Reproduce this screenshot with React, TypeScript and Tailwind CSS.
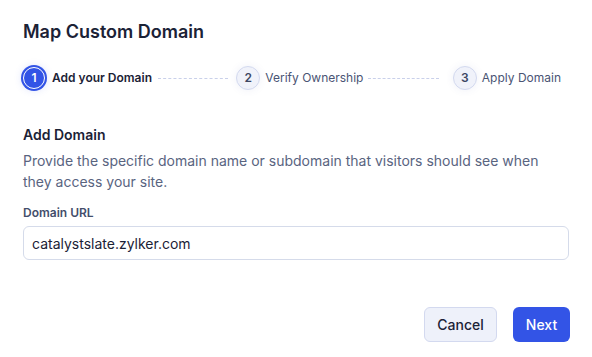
import React from "react";

function StepCircle({ n, active }: { n: number; active?: boolean }) {
  if (active) {
    return (
      <div className="flex h-[22px] w-[22px] items-center justify-center rounded-full bg-[#3354e6] border-[1.5px] border-white ring-2 ring-[#3354e6] text-[12px] font-semibold text-white shadow-[0_0_8px_rgba(51,84,230,0.25)]">
        {n}
      </div>
    );
  }
  return (
    <div className="flex h-[24px] w-[24px] items-center justify-center rounded-full border border-[#d3d9ef] bg-[#f0f2fa] text-[12px] font-semibold text-[#3d4763] shadow-[0_0_8px_rgba(60,80,160,0.08)]">
      {n}
    </div>
  );
}

export default function App() {
  return (
    <div
      className="w-[592px] h-[357px] bg-white px-[23px] pt-[19px]"
      style={{ fontFamily: "Inter, 'Noto Sans', sans-serif" }}
    >
      <h1 className="text-[18px] leading-[26px] font-semibold text-[#1b2236]">
        Map Custom Domain
      </h1>

      <div className="mt-[21px] flex h-[24px] items-center">
        <div className="flex items-center gap-[7px]">
          <StepCircle n={1} active />
          <span className="text-[12px] font-semibold text-[#1b2236]">Add your Domain</span>
        </div>
        <div className="ml-[6px] mr-[8px] flex-1 border-t border-dashed border-[#c9d0ea]" />
        <div className="flex items-center gap-[5px]">
          <StepCircle n={2} />
          <span className="text-[12px] text-[#4a5474]">Verify Ownership</span>
        </div>
        <div className="ml-[5px] mr-[14px] flex-1 border-t border-dashed border-[#c9d0ea]" />
        <div className="flex items-center gap-[5px] pr-[8px]">
          <StepCircle n={3} />
          <span className="text-[12px] text-[#4a5474]">Apply Domain</span>
        </div>
      </div>

      <h2 className="mt-[35px] text-[14px] leading-[20px] font-semibold text-[#1b2236]">
        Add Domain
      </h2>
      <p className="mt-[5px] text-[14px] leading-[21px] text-[#59647f]">
        Provide the specific domain name or subdomain that visitors should see when they access your site.
      </p>

      <label className="mt-[13px] block text-[12px] leading-[16px] font-semibold text-[#434e6b]">
        Domain URL
      </label>
      <div className="mt-[5px] flex h-[34px] items-center rounded-[6px] border border-[#d5dbea] bg-white px-[8px] text-[14px] text-[#1b2236]">
        catalystslate.zylker.com
      </div>

      <div className="mt-[47px] flex justify-end gap-[16px] -mr-px">
        <button className="h-[35px] w-[73px] rounded-[6px] border border-[#d3d9ef] bg-[#eef1fa] text-[14px] font-medium text-[#1b2236]">
          Cancel
        </button>
        <button className="h-[35px] w-[57px] rounded-[6px] bg-[#3354e6] text-[14px] font-medium text-white">
          Next
        </button>
      </div>
    </div>
  );
}
